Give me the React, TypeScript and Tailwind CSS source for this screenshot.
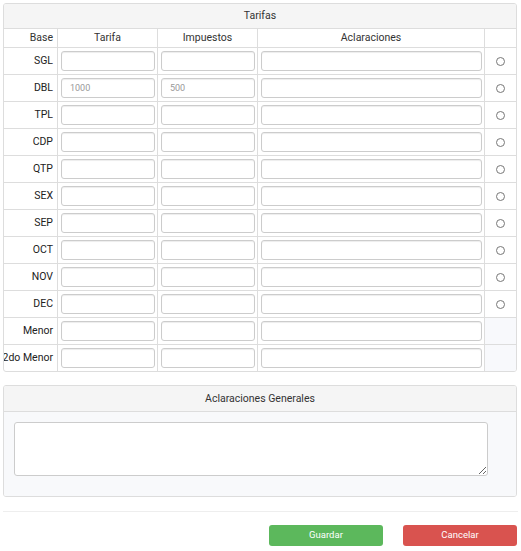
import React from 'react';

type Row = {
  base: string;
  tarifa?: string;
  impuestos?: string;
  radio: boolean;
};

const rows: Row[] = [
  { base: 'SGL', radio: true },
  { base: 'DBL', tarifa: '1000', impuestos: '500', radio: true },
  { base: 'TPL', radio: true },
  { base: 'CDP', radio: true },
  { base: 'QTP', radio: true },
  { base: 'SEX', radio: true },
  { base: 'SEP', radio: true },
  { base: 'OCT', radio: true },
  { base: 'NOV', radio: true },
  { base: 'DEC', radio: true },
  { base: 'Menor', radio: false },
  { base: '2do Menor', radio: false },
];

const cols = 'grid grid-cols-[54px_100px_100px_227px_31px]';

function Field({ placeholder }: { placeholder?: string }) {
  return (
    <input
      type="text"
      placeholder={placeholder}
      className="block h-[20px] w-full rounded-[3px] border border-[#cccccc] bg-white px-[8px] text-[9px] text-[#555] shadow-[inset_0_1px_1px_rgba(0,0,0,0.075)] outline-none placeholder:text-[#999]"
    />
  );
}

export default function App() {
  return (
    <div
      className="w-[521px] bg-white px-[3px] pt-[3px] text-[10.5px] text-[#333]"
      style={{ fontFamily: 'Roboto, "Liberation Sans", Arial, sans-serif' }}
    >
      {/* Tarifas */}
      <div className="w-[514px] overflow-hidden rounded-[3px] border border-[#dddddd]">
        <div className="flex h-[25px] items-center justify-center border-b border-[#dddddd] bg-[#f5f5f5]">
          Tarifas
        </div>
        <div className={`${cols} h-[18px] items-stretch`}>
          <div className="flex items-center justify-end border-r border-[#dddddd] pr-[4px]">Base</div>
          <div className="flex items-center justify-center border-r border-[#dddddd]">Tarifa</div>
          <div className="flex items-center justify-center border-r border-[#dddddd]">Impuestos</div>
          <div className="flex items-center justify-center border-r border-[#dddddd]">Aclaraciones</div>
          <div />
        </div>
        {rows.map((r) => (
          <div key={r.base} className={`${cols} h-[27px] border-t border-[#dddddd]`}>
            <div className="flex items-center justify-end whitespace-nowrap border-r border-[#dddddd] pr-[4px] text-[#222]">
              {r.base}
            </div>
            <div className="flex items-center border-r border-[#dddddd] pl-[3px] pr-[2px]">
              <Field placeholder={r.tarifa} />
            </div>
            <div className="flex items-center border-r border-[#dddddd] pl-[3px] pr-[2px]">
              <Field placeholder={r.impuestos} />
            </div>
            <div className="flex items-center border-r border-[#dddddd] pl-[3px] pr-[2px]">
              <Field />
            </div>
            {r.radio ? (
              <div className="flex items-center justify-center">
                <span className="block h-[9px] w-[9px] rounded-full border border-[#777] bg-white" />
              </div>
            ) : (
              <div className="bg-[#f8f9fc]" />
            )}
          </div>
        ))}
      </div>

      {/* Aclaraciones Generales */}
      <div className="mt-[13px] w-[514px] overflow-hidden rounded-[3px] border border-[#dddddd]">
        <div className="flex h-[26px] items-center justify-center border-b border-[#dddddd] bg-[#f5f5f5]">
          Aclaraciones Generales
        </div>
        <div className="bg-[#f8f9fb] pb-[20px] pl-[10px] pt-[10px]">
          <textarea className="block h-[54px] w-[474px] rounded-[3px] border border-[#cccccc] bg-white outline-none" />
        </div>
      </div>

      <div className="mt-[14px] border-t border-[#eeeeee]" />

      <div className="mt-[13px] flex w-[514px] justify-end gap-[20px]">
        <button className="h-[21px] w-[114px] rounded-[3px] bg-[#5cb85c] text-[9.5px] text-white">Guardar</button>
        <button className="h-[21px] w-[114px] rounded-[3px] bg-[#d9534f] text-[9.5px] text-white">Cancelar</button>
      </div>
    </div>
  );
}
